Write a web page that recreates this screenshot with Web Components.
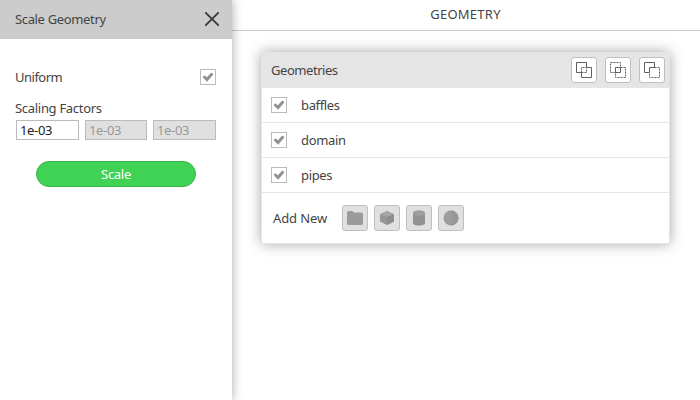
<!DOCTYPE html>
<html lang="en"><head><meta charset="utf-8"><title>Geometry</title>
<style>html,body{margin:0;height:100%;overflow:hidden;background:#fff}body{font:13px/18px "Noto Sans",sans-serif;color:#444;letter-spacing:-.35px}</style></head>
<body><geo-app></geo-app>
<script>
const define=(name,html)=>customElements.define(name,class extends HTMLElement{
  constructor(){super();const t=document.createElement('template');t.innerHTML=html;
    this.attachShadow({mode:'open'}).append(t.content.cloneNode(true));}
});

define('check-box',`<style>
:host{display:block;box-sizing:border-box;width:16px;height:16px;border:1px solid #bbb;background:#fff;flex:none}svg{display:block}
</style><svg width="14" height="14" viewBox="0 0 14 14"><path d="M3.4 7L6 9.5L10.600 4.300" fill="none" stroke="#929292" stroke-width="3" stroke-linecap="round"/></svg>`);

define('close-icon',`<style>:host{display:block;width:14px;height:14px;flex:none;margin-top:-1px}svg{display:block}</style>
<svg width="14" height="14"><path d="M.8 .8L13.2 13.2M13.2 .8L.8 13.2" fill="none" stroke="#3c3c3c" stroke-width="1.9" stroke-linecap="round"/></svg>`);

define('number-field',`<style>
:host{display:block;box-sizing:border-box;width:63px;height:20px;border:1px solid #bbb;background:#fff;color:#222;padding:0 3px;line-height:18px;white-space:nowrap}
:host([disabled]){background:#e0e0e0;color:#999}:host([narrow]){width:62px}
</style><slot></slot>`);

define('pill-button',`<style>
:host{display:flex;box-sizing:border-box;width:160px;height:26px;border:1px solid #36b449;border-radius:13px;background:#40d254;color:#fff;align-items:center;justify-content:center;letter-spacing:-.3px}
</style><slot></slot>`);

define('icon-button',`<style>
:host{display:block;box-sizing:border-box;width:26px;height:26px;border:1px solid #bfbfbf;border-radius:3px;background:#fff;flex:none}
:host([muted]){background:#e0e0e0}::slotted(svg){display:block}
</style><slot></slot>`);

define('geometry-row',`<style>
:host{display:flex;box-sizing:border-box;height:35px;border-bottom:1px solid #e5e5e5;align-items:center;padding-left:9px;gap:14px}
</style><check-box></check-box><span><slot></slot></span>`);

define('scale-panel',`<style>
:host{display:block;box-sizing:border-box;width:232px;height:400px;background:#fff;box-shadow:0 0 10px rgba(0,0,0,.35);position:relative;z-index:1}
header{display:flex;box-sizing:border-box;height:39px;background:#ccc;align-items:center;justify-content:space-between;padding:0 13px 0 15px}
header span{padding-bottom:1px}
main{padding:30px 16px 0}
.uniform{display:flex;justify-content:space-between;height:16px;align-items:center}
.label{margin:14px 0 3px -1px;height:18px;letter-spacing:-.3px}.fields{display:flex;gap:6px}pill-button{margin:21px 0 0 20px}
.uniform span{margin-left:-1px;letter-spacing:-.5px}
</style><header><span>Scale Geometry</span><close-icon></close-icon></header>
<main><div class="uniform"><span>Uniform</span><check-box></check-box></div>
<div class="label"><span>Scaling Factors</span></div>
<div class="fields"><number-field>1e-03</number-field><number-field disabled narrow>1e-03</number-field><number-field disabled>1e-03</number-field></div>
<pill-button>Scale</pill-button></main>`);

define('geometry-card',`<style>
:host{display:block;box-sizing:border-box;width:409px;height:192px;border:1px solid #e5e5e5;border-radius:2px;background:#fff;box-shadow:0 0 14px rgba(0,0,0,.35)}
header{display:flex;height:35px;background:#e5e5e5;align-items:center;padding:0 4px 0 9px;gap:8px}header span{margin-right:auto;padding-bottom:2px;letter-spacing:-.45px}
header icon-button{margin-top:-1px}
footer{display:flex;height:50px;align-items:center;padding-left:11px;gap:6px}footer span{width:63px;letter-spacing:-.1px}
</style><header><span>Geometries</span>
<icon-button><svg width="24" height="24"><g fill="none" stroke="#606060"><path d="M9.5 14.5h-5v-10h10v5h5v10h-10v-5"/><path d="M9.5 14.5v-5h5M9.5 14.5h5v-5" stroke-dasharray="2 1"/></g></svg></icon-button>
<icon-button><svg width="24" height="24"><g fill="none" stroke="#606060"><path d="M9.5 9.5h5v5h-5z"/><path d="M9.5 14.5h-5v-10h10v5M14.5 9.5h5v10h-10v-5" stroke-dasharray="2 1"/></g></svg></icon-button>
<icon-button><svg width="24" height="24"><g fill="none" stroke="#606060"><path d="M9.5 14.5h-5v-10h10v5h-5z"/><path d="M14.5 9.5h5v10h-10v-5" stroke-dasharray="2 1"/></g></svg></icon-button>
</header><slot></slot>
<footer><span>Add New</span>
<icon-button muted><svg width="24" height="24"><path d="M4 6.500q0-1.500 1.500-1.500h4l1.500 1.500h7.500q1.500 0 1.500 1.500v9.500q0 1.500-1.500 1.500h-13q-1.500 0-1.500-1.500z" fill="#9b9b9b"/></svg></icon-button>
<icon-button muted><svg width="24" height="24"><path d="M5 8.2L12 5l7 3.2V15.500L12 19l-7-3.500z" fill="#969696"/><path d="M5 8.2L12 5l7 3.200L12 11z" fill="#a5a5a5"/><path d="M12 11l7-2.800v7.300L12 19z" fill="#8e8e8e"/></svg></icon-button>
<icon-button muted><svg width="24" height="24"><path d="M6 7v10c0 3.500 12 3.500 12 0V7z" fill="#929292"/><ellipse cx="12" cy="7" rx="6" ry="2.700" fill="#a0a0a0"/></svg></icon-button>
<icon-button muted><svg width="24" height="24"><circle cx="12" cy="12" r="7.500" fill="#9d9d9d"/><path d="M12 4.500a7.500 7.500 0 0 1 0 15q3-7.500 0-15" fill="#979797"/></svg></icon-button>
</footer>`);

define('geo-app',`<style>
:host{display:flex;width:700px;height:400px;overflow:hidden}.stage{width:468px}
.top{box-sizing:border-box;height:31px;border-bottom:1px solid #ccc;text-align:center;padding:5px 1px 0 0;letter-spacing:.25px}
geometry-card{margin:21px 0 0 29px}
</style><scale-panel></scale-panel><div class="stage"><div class="top"><span>GEOMETRY</span></div>
<geometry-card><geometry-row>baffles</geometry-row><geometry-row>domain</geometry-row><geometry-row>pipes</geometry-row></geometry-card></div>`);
</script></body></html>
